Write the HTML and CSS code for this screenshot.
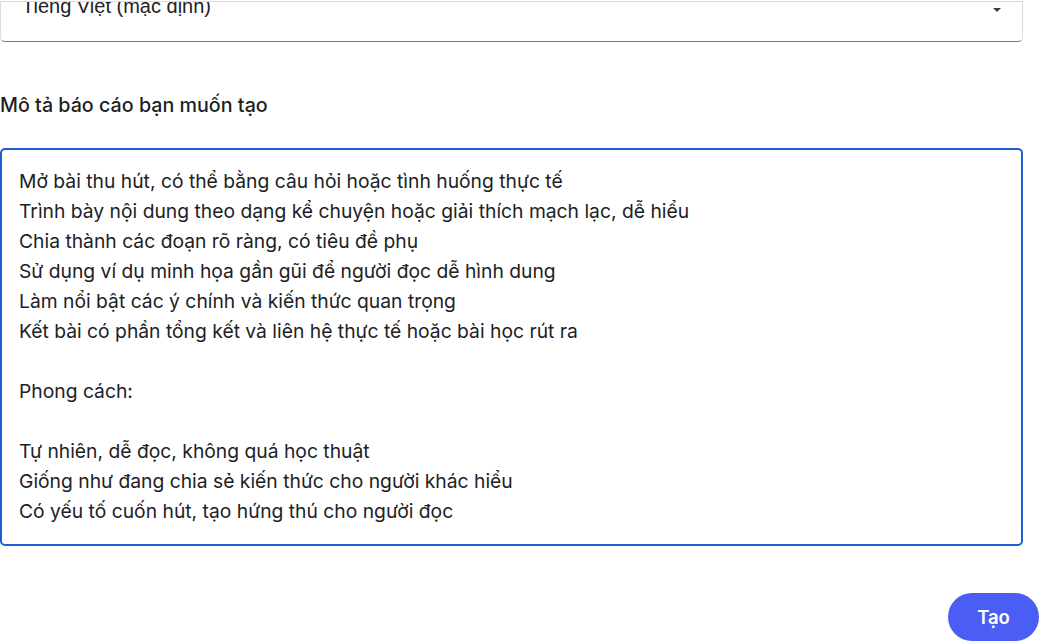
FILE: index.html
```html
<!DOCTYPE html>
<html lang="vi">
<head>
    <meta charset="UTF-8">
    <meta name="viewport" content="width=device-width, initial-scale=1.0">
    <title>Tạo báo cáo</title>
    <link rel="stylesheet" href="styles.css">
</head>
<body>
    <div class="report-form">
        <div class="lang-select">
            <span class="lang-value">Tiếng Việt (mặc định)</span>
            <span class="lang-arrow"></span>
        </div>

        <label class="field-label" for="report-desc">Mô tả báo cáo bạn muốn tạo</label>
        <textarea id="report-desc" class="report-desc">Mở bài thu hút, có thể bằng câu hỏi hoặc tình huống thực tế
Trình bày nội dung theo dạng kể chuyện hoặc giải thích mạch lạc, dễ hiểu
Chia thành các đoạn rõ ràng, có tiêu đề phụ
Sử dụng ví dụ minh họa gần gũi để người đọc dễ hình dung
Làm nổi bật các ý chính và kiến thức quan trọng
Kết bài có phần tổng kết và liên hệ thực tế hoặc bài học rút ra

Phong cách:

Tự nhiên, dễ đọc, không quá học thuật
Giống như đang chia sẻ kiến thức cho người khác hiểu
Có yếu tố cuốn hút, tạo hứng thú cho người đọc</textarea>

        <div class="actions">
            <button class="create-btn">Tạo</button>
        </div>
    </div>
</body>
</html>
```

FILE: styles.css
```css
body {
    margin: 0;
    background-color: #ffffff;
    font-family: Inter, "Noto Sans", sans-serif;
    color: #1f1f1f;
    overflow: hidden;
}

.report-form {
    width: 1041px;
    display: flex;
    flex-direction: column;
}

/* select is scrolled half out of view */
.lang-select {
    width: 1023px;
    height: 41px;
    margin-top: 1px;
    box-sizing: border-box;
    border: 1px solid #dadada;
    border-bottom-color: #767676;
    border-radius: 0 0 5px 5px;
    overflow: hidden;
    display: flex;
    justify-content: space-between;
    align-items: flex-start;
    padding: 0 21px 0 21px;
}

.lang-value {
    font-family: "Liberation Sans", Arial, sans-serif;
    font-size: 20px;
    line-height: 20px;
    color: #222222;
    margin-top: -6px;
}

.lang-arrow {
    width: 0;
    height: 0;
    margin-top: 6px;
    border-left: 4px solid transparent;
    border-right: 4px solid transparent;
    border-top: 4px solid #3c3c3c;
}

.field-label {
    margin-top: 51px;
    font-size: 19.7px;
    font-weight: 500;
    line-height: 24px;
    color: #1f1f1f;
}

.report-desc {
    margin-top: 31px;
    width: 1023px;
    height: 398px;
    box-sizing: border-box;
    border: 2px solid #1a5fd0;
    border-radius: 5px;
    padding: 16px 17px;
    font-family: Inter, "Noto Sans", sans-serif;
    font-size: 19.3px;
    line-height: 30px;
    color: #202124;
    resize: none;
    outline: none;
    overflow: hidden;
}

.actions {
    display: flex;
    justify-content: flex-end;
    margin-top: 47px;
    padding-right: 2px;
}

.create-btn {
    width: 91px;
    height: 48px;
    border: none;
    border-radius: 24px;
    background-color: #4a5ef5;
    color: #ffffff;
    font-family: Inter, "Noto Sans", sans-serif;
    font-size: 18.5px;
    font-weight: 600;
    cursor: pointer;
}
```
